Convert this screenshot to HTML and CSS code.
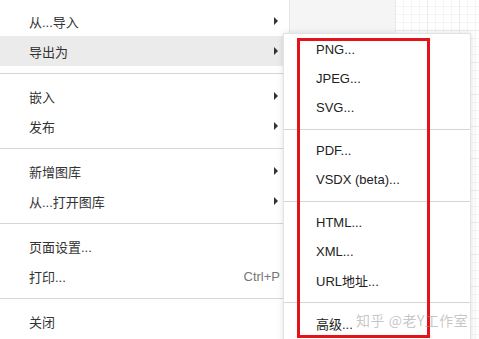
FILE: index.html
```html
<!DOCTYPE html>
<html lang="zh-CN">
<head>
    <meta charset="UTF-8">
    <title>文件菜单</title>
    <link rel="stylesheet" href="styles.css">
</head>
<body>
    <div class="screen">
        <div class="menu">
            <div class="item">从...导入<span class="arrow"></span></div>
            <div class="item active">导出为<span class="arrow"></span></div>
            <div class="sep"></div>
            <div class="item">嵌入<span class="arrow"></span></div>
            <div class="item">发布<span class="arrow"></span></div>
            <div class="sep"></div>
            <div class="item">新增图库<span class="arrow"></span></div>
            <div class="item">从...打开图库<span class="arrow"></span></div>
            <div class="sep"></div>
            <div class="item">页面设置...</div>
            <div class="item">打印...<span class="shortcut">Ctrl+P</span></div>
            <div class="sep"></div>
            <div class="item">关闭</div>
        </div>
        <div class="panel"></div>
        <div class="grid"></div>

        <!-- export submenu, opened from 导出为 -->
        <div class="submenu">
            <div class="sub-item">PNG...</div>
            <div class="sub-item">JPEG...</div>
            <div class="sub-item">SVG...</div>
            <div class="sub-sep"></div>
            <div class="sub-item">PDF...</div>
            <div class="sub-item">VSDX (beta)...</div>
            <div class="sub-sep"></div>
            <div class="sub-item">HTML...</div>
            <div class="sub-item">XML...</div>
            <div class="sub-item">URL地址...</div>
            <div class="sub-sep"></div>
            <div class="sub-item">高级...</div>
        </div>

        <div class="highlight"></div>
        <div class="watermark">知乎 @老Y工作室</div>
    </div>
</body>
</html>
```

FILE: styles.css
```css
body {
    margin: 0;
    font-family: "Liberation Sans", "Noto Sans CJK SC", Arial, sans-serif;
    font-size: 13px;
    color: #222;
    overflow: hidden;
}
.screen {
    position: relative;
    display: flex;
    width: 479px;
    height: 339px;
    overflow: hidden;
}
.menu {
    width: 290px;
    flex-shrink: 0;
    padding-top: 6px;
    background-color: white;
    border-right: 1px solid #e6e6e6;
    box-sizing: border-box;
    color: #333;
}
.item {
    display: flex;
    align-items: center;
    height: 30px;
    padding-left: 29px;
    padding-right: 11px;
}
.item.active {
    background-color: #ebebeb;
}
.arrow {
    margin-left: auto;
    width: 0;
    height: 0;
    border-top: 4px solid transparent;
    border-bottom: 4px solid transparent;
    border-left: 4px solid #333;
}
.shortcut {
    margin-left: auto;
    margin-right: -2px;
    color: #777;
}
.sep {
    height: 1px;
    margin: 7px 0;
    background-color: #d6d6d6;
}
.panel {
    width: 105px;
    flex-shrink: 0;
    background-color: #f5f5f5;
    border-right: 1px solid #e8e8e8;
}
.grid {
    flex-grow: 1;
    background-color: white;
    background-image:
        linear-gradient(to right, #ececec 1px, transparent 1px),
        linear-gradient(to bottom, #ececec 1px, transparent 1px),
        linear-gradient(to right, #f5f5f5 1px, transparent 1px),
        linear-gradient(to bottom, #f5f5f5 1px, transparent 1px);
    background-size: 32px 32px, 32px 32px, 8px 8px, 8px 8px;
    background-position: -1px -2px;
}
.submenu {
    position: absolute;
    left: 283px;
    top: 33px;
    width: 188px;
    height: 320px;
    padding-top: 1px;
    background-color: white;
    border: 1px solid #e2e2e2;
    box-shadow: 0 0 6px rgba(0,0,0,0.12);
    box-sizing: border-box;
}
.sub-item {
    display: flex;
    align-items: center;
    height: 29px;
    padding-left: 32px;
}
.sub-sep {
    height: 1px;
    margin: 7px 0 6px;
    background-color: #d6d6d6;
}
.highlight {
    position: absolute;
    left: 297px;
    top: 38px;
    width: 133px;
    height: 300px;
    border: 3px solid #e3121b;
    box-sizing: border-box;
}
.watermark {
    position: absolute;
    left: 356px;
    top: 310px;
    font-family: "Noto Sans CJK SC", sans-serif;
    font-size: 14px;
    color: rgba(150,150,150,0.55);
    letter-spacing: 0.5px;
}
```
